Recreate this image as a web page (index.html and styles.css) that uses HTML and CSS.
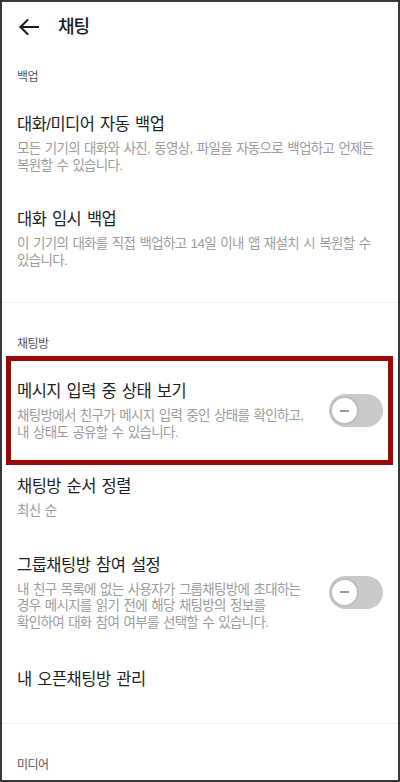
FILE: index.html
```html
<!DOCTYPE html>
<html lang="ko">

<head>
    <meta charset="UTF-8">
    <meta name="viewport" content="width=device-width, initial-scale=1.0">
    <title>채팅</title>
    <link rel="stylesheet" href="styles.css">
</head>

<body>
    <div class="screen">
        <div class="header">
            <svg class="back" width="20" height="16" viewBox="0 0 20 16">
                <path d="M8.5 1 L1.5 8 L8.5 15 M1.5 8 H20" fill="none" stroke="#1a1a1a" stroke-width="2" stroke-linecap="square" />
            </svg>
            <span class="title">채팅</span>
        </div>

        <div class="group">
            <div class="label first">백업</div>
            <div class="item">
                <div class="text">
                    <div class="name">대화/미디어 자동 백업</div>
                    <div class="desc">모든 기기의 대화와 사진, 동영상, 파일을 자동으로 백업하고 언제든<br>복원할 수 있습니다.</div>
                </div>
            </div>
            <div class="item">
                <div class="text">
                    <div class="name">대화 임시 백업</div>
                    <div class="desc">이 기기의 대화를 직접 백업하고 14일 이내 앱 재설치 시 복원할 수<br>있습니다.</div>
                </div>
            </div>
        </div>

        <div class="group">
            <div class="label">채팅방</div>
            <div class="item marked">
                <div class="text">
                    <div class="name">메시지 입력 중 상태 보기</div>
                    <div class="desc">채팅방에서 친구가 메시지 입력 중인 상태를 확인하고,<br>내 상태도 공유할 수 있습니다.</div>
                </div>
                <div class="toggle"><span class="knob"></span></div>
            </div>
            <div class="item">
                <div class="text">
                    <div class="name">채팅방 순서 정렬</div>
                    <div class="desc">최신 순</div>
                </div>
            </div>
            <div class="item tall">
                <div class="text">
                    <div class="name">그룹채팅방 참여 설정</div>
                    <div class="desc">내 친구 목록에 없는 사용자가 그룹채팅방에 초대하는<br>경우 메시지를 읽기 전에 해당 채팅방의 정보를<br>확인하여 대화 참여 여부를 선택할 수 있습니다.</div>
                </div>
                <div class="toggle"><span class="knob"></span></div>
            </div>
            <div class="item">
                <div class="text">
                    <div class="name">내 오픈채팅방 관리</div>
                </div>
            </div>
        </div>

        <div class="group">
            <div class="label">미디어</div>
        </div>
    </div>
</body>

</html>
```

FILE: styles.css
```css
body {
    margin: 0;
    padding: 0;
    font-family: "Liberation Sans", "Noto Sans CJK KR", sans-serif;
    background-color: #fff;
}

.screen {
    width: 400px;
    height: 782px;
    box-sizing: border-box;
    border: 2px solid #383838;
    overflow: hidden;
    background-color: #fff;
}

.header {
    height: 50px;
    display: flex;
    align-items: center;
    padding-left: 17px;
}

.back {
    display: block;
}

.title {
    margin-left: 19px;
    font-size: 18px;
    font-weight: 500;
    letter-spacing: -1px;
    color: #1a1a1a;
    line-height: 22px;
}

.group {
    padding-bottom: 16px;
    border-bottom: 1px solid #f0f0f0;
}

.group:last-child {
    border-bottom: none;
}

.label {
    padding: 33px 15px 11px;
    font-size: 12px;
    line-height: 16px;
    letter-spacing: -0.5px;
    color: #555;
}

.label.first {
    padding-top: 17px;
}

.item {
    position: relative;
    display: flex;
    align-items: center;
    padding: 17px 15px;
}

.item.tall {
    padding-bottom: 20px;
}

.item.marked::after {
    content: "";
    position: absolute;
    top: -7px;
    bottom: -7px;
    left: 4px;
    right: 5px;
    border: 5px solid #960a0a;
    pointer-events: none;
}

.text {
    flex: 1;
}

.name {
    font-size: 16.5px;
    line-height: 22px;
    letter-spacing: -0.5px;
    word-spacing: 1.5px;
    color: #1e1e1e;
}

.desc {
    margin-top: 6px;
    font-size: 13.5px;
    line-height: 16.5px;
    letter-spacing: -0.7px;
    word-spacing: 1.2px;
    color: #9c9c9c;
}

.toggle {
    width: 54px;
    height: 33px;
    box-sizing: border-box;
    padding: 2px 1px;
    border-radius: 17px;
    background-color: #cacaca;
    flex-shrink: 0;
}

.knob {
    display: flex;
    align-items: center;
    justify-content: center;
    width: 29px;
    height: 29px;
    box-sizing: border-box;
    border-radius: 50%;
    border: 2px solid #bdbdbd;
    background-color: #fff;
}

.knob::before {
    content: "";
    width: 9px;
    height: 2px;
    background-color: #999;
}
```
